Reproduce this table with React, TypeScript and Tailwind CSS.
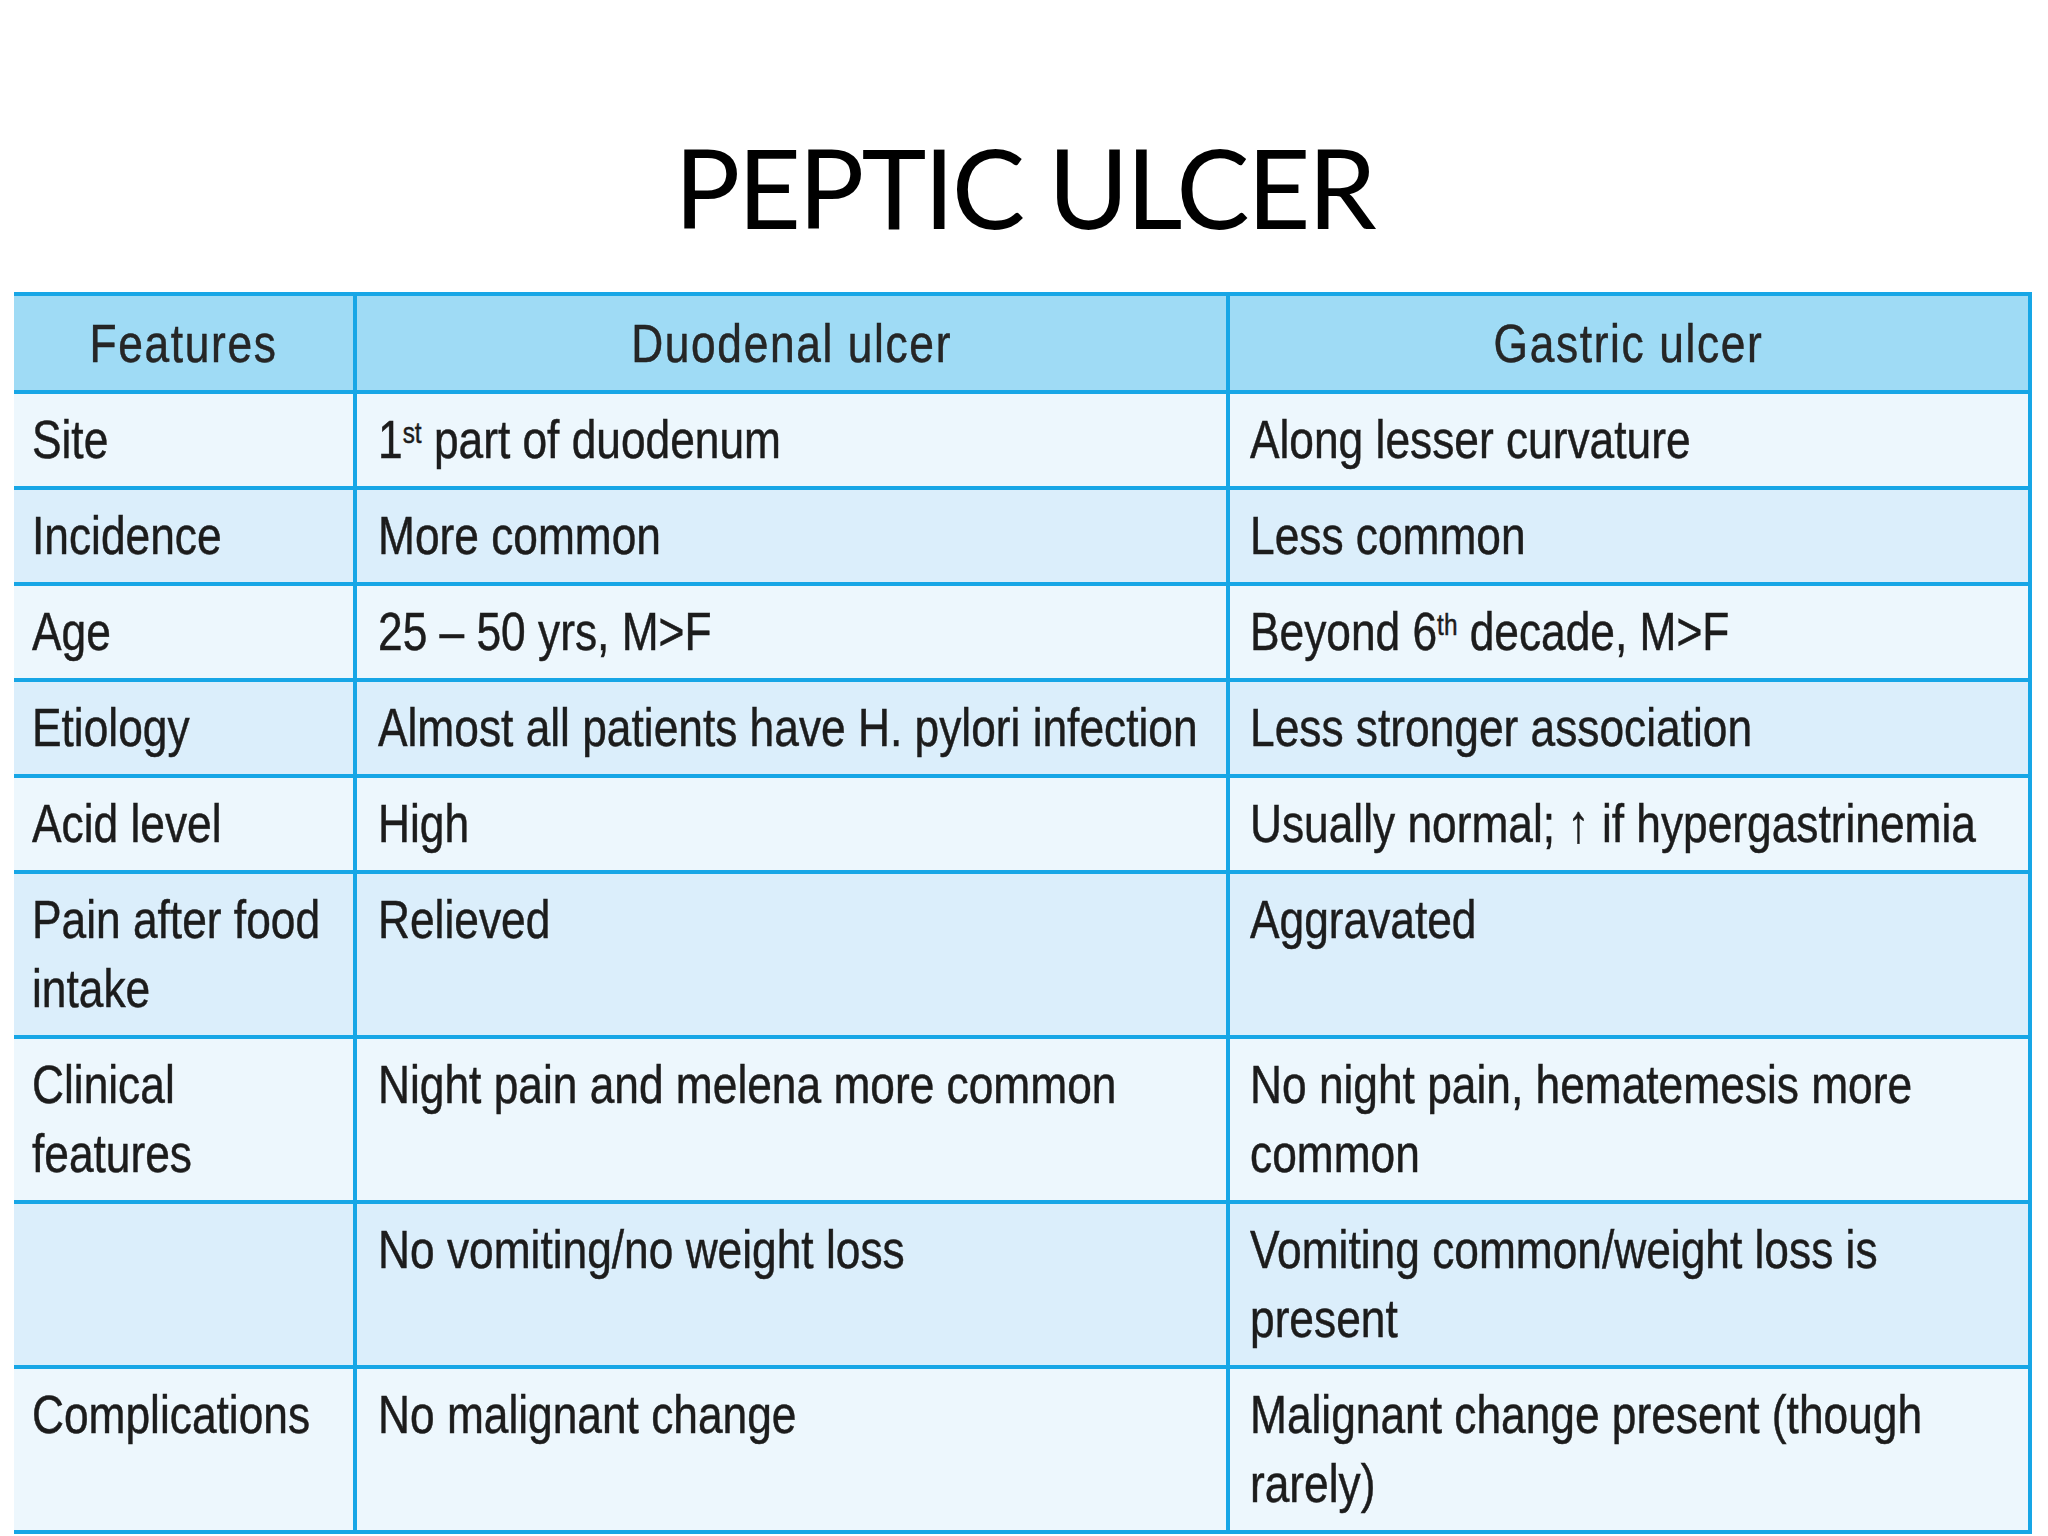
const rows = [
  { feature: "Site", duodenal: <>1<sup className="text-[0.55em]">st</sup> part of duodenum</>, gastric: "Along lesser curvature", dark: false },
  { feature: "Incidence", duodenal: "More common", gastric: "Less common", dark: true },
  { feature: "Age", duodenal: "25 – 50 yrs, M>F", gastric: <>Beyond 6<sup className="text-[0.55em]">th</sup> decade, M&gt;F</>, dark: false },
  { feature: "Etiology", duodenal: "Almost all patients have H. pylori infection", gastric: "Less stronger association", dark: true },
  { feature: "Acid level", duodenal: "High", gastric: "Usually normal; ↑ if hypergastrinemia", dark: false },
  { feature: "Pain after food intake", duodenal: "Relieved", gastric: "Aggravated", dark: true },
  { feature: "Clinical features", duodenal: "Night pain and melena more common", gastric: "No night pain, hematemesis more common", dark: false },
  { feature: "", duodenal: "No vomiting/no weight loss", gastric: "Vomiting common/weight loss is present", dark: true },
  { feature: "Complications", duodenal: "No malignant change", gastric: "Malignant change present (though rarely)", dark: false },
];

// Arial Narrow look: Liberation Sans squeezed horizontally; the boxes are widened
// by the same factor so the text wraps where the narrow face would.
const line = "border-[#17a6e6]";

export default function App() {
  return (
    <div className="h-[1536px] w-[2048px] overflow-hidden bg-white">
      {/* Slide title */}
      <h1 className="pt-[121px] text-center font-['Lato',sans-serif] text-[110px] leading-[130px] tracking-[-0.025em] text-black">
        PEPTIC ULCER
      </h1>

      {/* Comparison table */}
      <table className="ml-[14px] mt-[41px] w-[2018px] table-fixed border-collapse font-['Liberation_Sans',sans-serif] text-[54px] leading-[69px] text-[#1c1c1c] [-webkit-text-stroke:0.5px_#1c1c1c]">
        <colgroup>
          <col className="w-[341px]" />
          <col className="w-[873px]" />
          <col />
        </colgroup>
        <thead>
          <tr className="h-[98px] bg-[#9fdbf5] text-[#262626]">
            <th className={`border-y-4 border-r-4 ${line} font-normal`}>
              <span className="inline-block scale-x-[0.82] tracking-[2px]">Features</span>
            </th>
            <th className={`border-4 ${line} font-normal`}>
              <span className="inline-block scale-x-[0.82] tracking-[2px]">Duodenal ulcer</span>
            </th>
            <th className={`border-4 ${line} font-normal`}>
              <span className="inline-block scale-x-[0.82] tracking-[2px]">Gastric ulcer</span>
            </th>
          </tr>
        </thead>
        <tbody>
          {rows.map((r, i) => (
            <tr key={i} className={r.dark ? "bg-[#dbeefb]" : "bg-[#edf7fd]"}>
              <td className={`border-y-4 border-r-4 ${line} pb-[12px] pl-[18px] pt-[11px] align-top`}>
                <div className="w-[384px] origin-left scale-x-[0.82]">{r.feature}</div>
              </td>
              <td className={`border-4 ${line} pb-[12px] pl-[21px] pt-[11px] align-top`}>
                <div className="w-[1030px] origin-left scale-x-[0.82]">{r.duodenal}</div>
              </td>
              <td className={`border-4 ${line} pb-[12px] pl-[20px] pt-[11px] align-top`}>
                <div className="w-[940px] origin-left scale-x-[0.82]">{r.gastric}</div>
              </td>
            </tr>
          ))}
        </tbody>
      </table>
    </div>
  );
}
